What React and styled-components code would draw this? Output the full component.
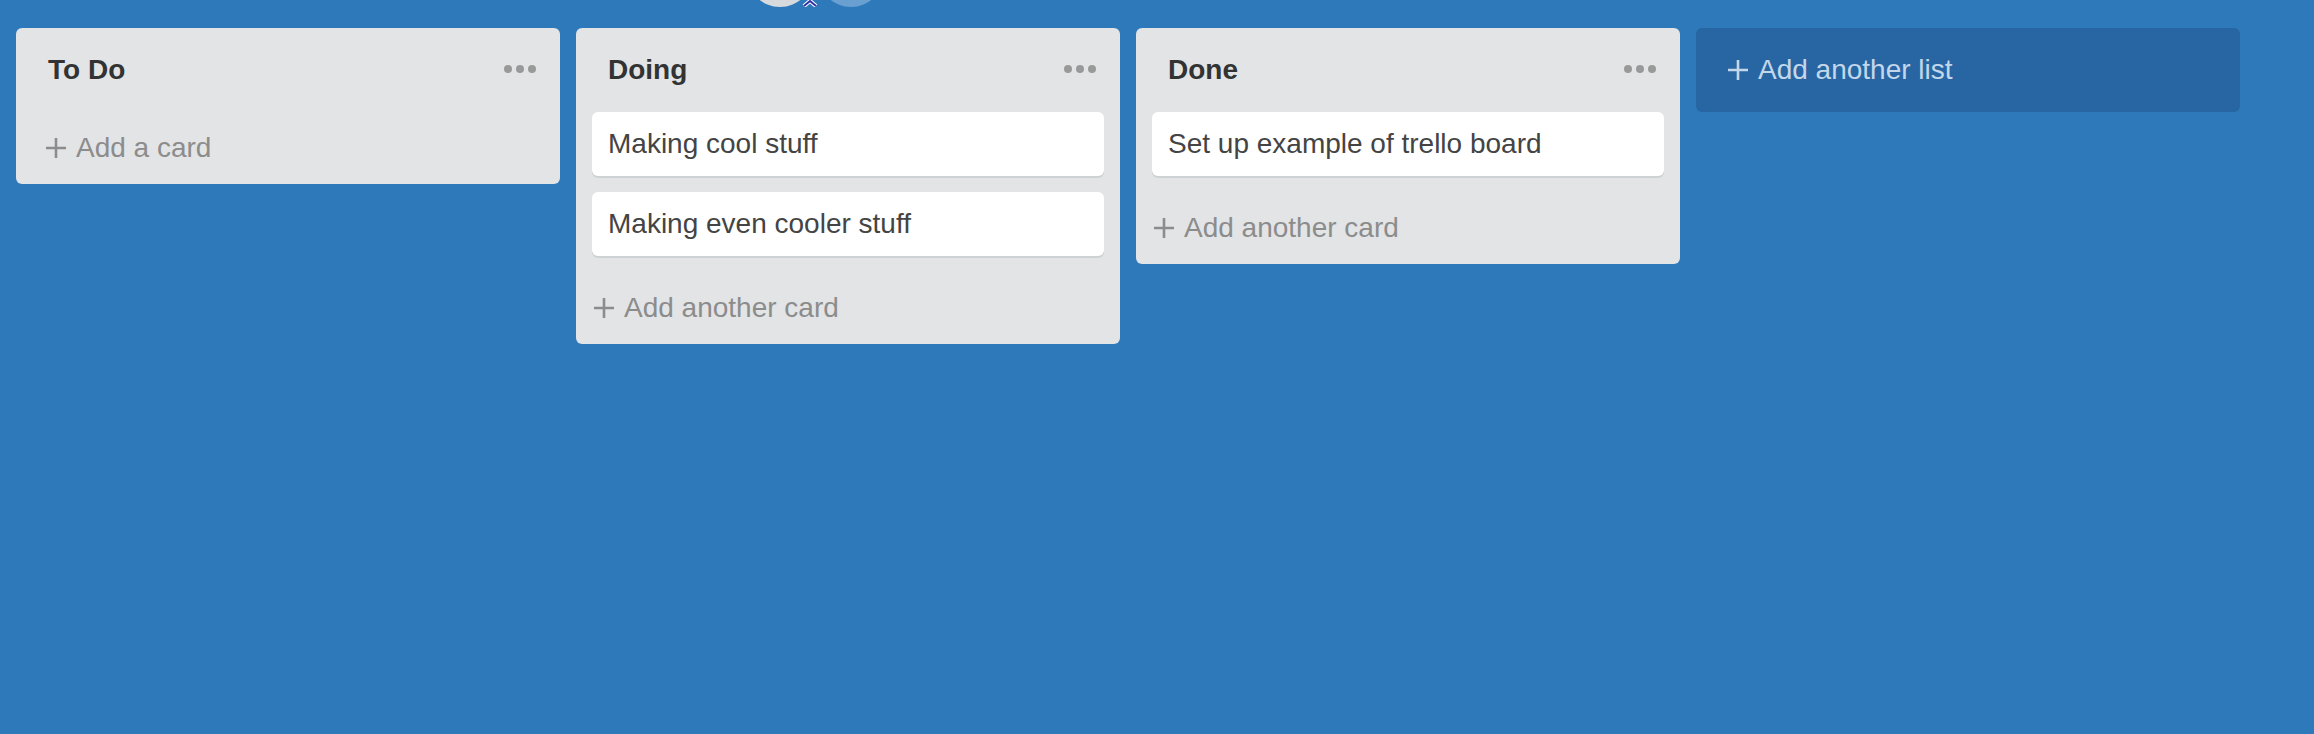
import { createGlobalStyle, styled } from "styled-components";

const GlobalStyle = createGlobalStyle`
  html, body {
    margin: 0;
    padding: 0;
    background: #2e79ba;
  }
  body {
    font-family: "Liberation Sans", Arial, sans-serif;
  }
`;

const Page = styled.div`
  position: relative;
  min-height: 734px;
  background: #2e79ba;
  overflow: hidden;
`;

// avatars of the (scrolled away) board header, only their bottom edge shows
const Avatars = styled.div`
  position: absolute;
  top: -59px;
  left: 747px;
  display: flex;
  gap: 5px;
`;

const Avatar = styled.div`
  position: relative;
  width: 66px;
  height: 66px;
  border-radius: 50%;
  background: ${(p) => p.$bg};
`;

const AvatarBadge = styled.svg`
  position: absolute;
  right: -6px;
  bottom: 0px;
  z-index: 1;
`;

const Board = styled.div`
  display: flex;
  align-items: flex-start;
  gap: 16px;
  padding: 28px 16px;
`;

const List = styled.div`
  width: 544px;
  flex-shrink: 0;
  background: #e2e4e6;
  border-radius: 6px;
  display: flex;
  flex-direction: column;
`;

const ListHeader = styled.div`
  height: 84px;
  display: flex;
  align-items: center;
  justify-content: space-between;
  padding: 0 24px 0 32px;
`;

const ListTitle = styled.h2`
  margin: 0;
  font-size: 28px;
  font-weight: 700;
  color: #333;
`;

const Dots = styled.div`
  display: flex;
  gap: 4px;
  margin-top: -2px;
`;

const Dot = styled.span`
  width: 8px;
  height: 8px;
  border-radius: 50%;
  background: #999;
`;

const Cards = styled.div`
  display: flex;
  flex-direction: column;
  gap: 16px;
  padding: 0 16px;
  margin-bottom: 16px;
`;

const Card = styled.div`
  height: 64px;
  display: flex;
  align-items: center;
  padding: 0 16px;
  background: #fff;
  border-radius: 6px;
  box-shadow: 0 2px 0 #cdd2d4;
  font-size: 28px;
  color: #444;
`;

const AddCard = styled.div`
  height: 72px;
  display: flex;
  align-items: center;
  gap: 10px;
  padding-left: ${(p) => p.$indent}px;
  font-size: 28px;
  color: #8c8c8c;
  cursor: pointer;
`;

const AddList = styled.div`
  width: 544px;
  height: 84px;
  flex-shrink: 0;
  box-sizing: border-box;
  display: flex;
  align-items: center;
  gap: 10px;
  padding-left: 32px;
  background: #2866a3;
  border-radius: 6px;
  font-size: 28px;
  color: #c3d7ea;
  cursor: pointer;
`;

const Plus = () => (
  <svg width="20" height="20" viewBox="0 0 20 20">
    <path d="M10 0 V20 M0 10 H20" stroke="currentColor" strokeWidth="2.6" fill="none" />
  </svg>
);

const lists = [
  { title: "To Do", cards: [], add: "Add a card", indent: 30 },
  { title: "Doing", cards: ["Making cool stuff", "Making even cooler stuff"], add: "Add another card", indent: 18 },
  { title: "Done", cards: ["Set up example of trello board"], add: "Add another card", indent: 18 },
];

export default function App() {
  return (
    <Page>
      <GlobalStyle />
      <Avatars>
        <Avatar $bg="#d6dadd">
          <AvatarBadge width="18" height="8" viewBox="0 0 18 8">
            <path d="M3 7 L9 2 L15 7" stroke="#fff" strokeWidth="4" fill="none" />
            <path d="M3 7 L9 2 L15 7" stroke="#3232a8" strokeWidth="2" fill="none" />
          </AvatarBadge>
        </Avatar>
        <Avatar $bg="#6a9fd1" />
      </Avatars>
      <Board>
        {lists.map((list) => (
          <List key={list.title}>
            <ListHeader>
              <ListTitle>{list.title}</ListTitle>
              <Dots>
                <Dot />
                <Dot />
                <Dot />
              </Dots>
            </ListHeader>
            {list.cards.length > 0 && (
              <Cards>
                {list.cards.map((c) => (
                  <Card key={c}>{c}</Card>
                ))}
              </Cards>
            )}
            <AddCard $indent={list.indent}>
              <Plus />
              {list.add}
            </AddCard>
          </List>
        ))}
        <AddList>
          <Plus />
          Add another list
        </AddList>
      </Board>
    </Page>
  );
}
